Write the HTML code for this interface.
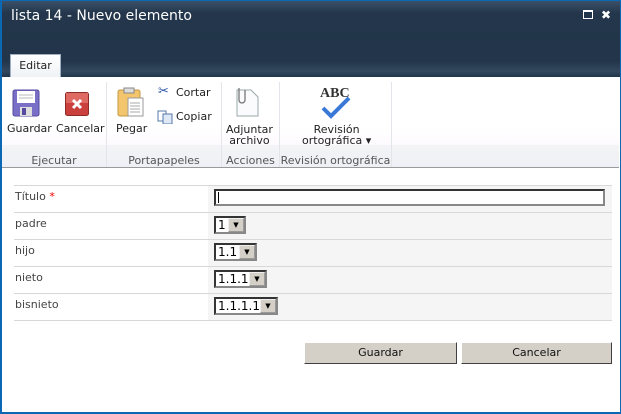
<!DOCTYPE html>
<html><head><meta charset="utf-8"><style>
*{margin:0;padding:0;box-sizing:border-box}
body{width:621px;height:414px;overflow:hidden;background:#fff;font-family:"DejaVu Sans","Liberation Sans",sans-serif;font-size:11px;color:#333;position:relative}
.a{position:absolute}
.frame{left:0;top:0;width:621px;height:414px;border:1px solid #0a68b4;border-left-width:2px;border-bottom-width:2px}
.title{left:2px;top:1px;width:618px;height:76px;background:linear-gradient(#3b5069 0,#23364b 12px,#22354a 60px,#33475e 70px,#22354a 76px)}
.tt{left:11px;top:8px;color:#fff;font-size:14px}
.tab{left:10px;top:54px;width:51px;height:24px;background:linear-gradient(#fff,#eef2f6);border:1px solid #9fb0c3;border-bottom:none;color:#222;font-size:11px;text-align:center;line-height:22px}
.rib{left:2px;top:77px;width:617px;height:68px;background:linear-gradient(#fff 50px,#fdfaff)}
.grp{left:2px;top:145px;width:617px;height:23px;background:linear-gradient(#f4f4f6,#edf0f5);border-bottom:1px solid #9a9a9a}
.sep{top:82px;width:1px;height:85px;background:#e2e5ea}
.gl{top:154px;color:#555;font-size:11px;text-align:center}
.bl{color:#222;font-size:11px;text-align:center;line-height:11px}
.line{left:14px;width:598px;height:1px;background:#d8d8d8}
.ctl{left:208px;top:185px;width:404px;height:135px;background:#f5f5f5}
.lab{left:15px;font-size:11px;color:#444}
.sel{height:18px;border:2px inset #888;background:#fff;font-size:12px;color:#000;padding-left:2px;line-height:14px}
.sel span{position:absolute;right:0;top:0;width:16px;height:14px;background:#d4d0c8;border:1px outset #eee;font-size:7px;text-align:center;line-height:12px}
.btn{top:342px;height:22px;background:#d4d0c8;border:1px solid;border-color:#fff #404040 #404040 #fff;font-size:11px;color:#111;text-align:center;line-height:20px}
</style></head><body>
<div class="a title"></div>
<div class="a tt">lista 14 - Nuevo elemento</div>
<div class="a" style="left:583px;top:10px;width:10px;height:9px;border:1px solid #fff;border-top-width:2px;background:#22354a"></div>
<div class="a" style="left:601px;top:8px;color:#fff;font-size:12px;font-weight:bold">✖</div>
<div class="a tab">Editar</div>
<div class="a rib"></div>
<div class="a grp"></div>
<div class="a sep" style="left:106px"></div>
<div class="a sep" style="left:221px"></div>
<div class="a sep" style="left:279px"></div>
<div class="a sep" style="left:391px"></div>
<svg class="a" style="left:12px;top:89px" width="28" height="28"><rect x="1" y="1" width="26" height="26" rx="2" fill="#7a6fc6" stroke="#554aa0"/><rect x="5" y="2" width="18" height="12" fill="#fff"/><line x1="7" y1="6" x2="21" y2="6" stroke="#bbb"/><line x1="7" y1="9" x2="21" y2="9" stroke="#bbb"/><rect x="8" y="18" width="12" height="9" fill="#ddd"/><rect x="10" y="19" width="4" height="7" fill="#554aa0"/></svg>
<svg class="a" style="left:65px;top:92px" width="24" height="24"><rect x="0.5" y="0.5" width="23" height="23" rx="2" fill="#c9403c" stroke="#8d2b26"/><rect x="1" y="1" width="22" height="10" fill="#de6a63"/><path d="M8 8l8 8M16 8l-8 8" stroke="#fff" stroke-width="3"/></svg>
<svg class="a" style="left:117px;top:86px" width="28" height="32"><rect x="1" y="4" width="22" height="26" rx="2" fill="#f3c66e" stroke="#c49640"/><rect x="7" y="2" width="10" height="5" fill="#ddd" stroke="#888"/><rect x="11" y="12" width="15" height="18" fill="#fff" stroke="#999"/><path d="M13 17h10M13 20h10M13 23h10M13 26h10" stroke="#aaa"/></svg>
<div class="a" style="left:158px;top:84px;color:#2a55a8;font-size:13px">✂</div>
<svg class="a" style="left:157px;top:110px" width="16" height="14"><rect x="1" y="1" width="8" height="10" fill="#fff" stroke="#5577aa"/><rect x="6" y="4" width="9" height="10" fill="#dfe8f5" stroke="#5577aa"/></svg>
<svg class="a" style="left:233px;top:86px" width="28" height="32"><path d="M4 4h14l7 7v19H4z" fill="#fbfbfd" stroke="#9aa"/><path d="M6 2v12a3 3 0 0 0 6 0V4" fill="none" stroke="#777" stroke-width="1.3"/></svg>
<div class="a" style="left:320px;top:86px;font-family:'Liberation Serif',serif;font-weight:bold;font-size:14px;color:#333">ABC</div>
<svg class="a" style="left:320px;top:96px" width="32" height="24"><path d="M3 12l8 8L29 2" fill="none" stroke="#3a78d8" stroke-width="4"/></svg>
<div class="a bl" style="left:7px;top:123px">Guardar</div>
<div class="a bl" style="left:56px;top:123px">Cancelar</div>
<div class="a bl" style="left:116px;top:123px">Pegar</div>
<div class="a bl" style="left:176px;top:87px">Cortar</div>
<div class="a bl" style="left:176px;top:111px">Copiar</div>
<div class="a bl" style="left:226px;top:124px">Adjuntar<br>archivo</div>
<div class="a bl" style="left:302px;top:124px">Revisión<br>ortográfica ▾</div>
<div class="a gl" style="left:2px;width:104px">Ejecutar</div>
<div class="a gl" style="left:107px;width:114px">Portapapeles</div>
<div class="a gl" style="left:222px;width:57px">Acciones</div>
<div class="a gl" style="left:280px;width:111px">Revisión ortográfica</div>
<div class="a ctl"></div>
<div class="a line" style="top:185px"></div>
<div class="a line" style="top:212px"></div>
<div class="a line" style="top:239px"></div>
<div class="a line" style="top:266px"></div>
<div class="a line" style="top:293px"></div>
<div class="a line" style="top:320px"></div>
<div class="a lab" style="top:190px">Título <span style="color:#e00">*</span></div>
<div class="a lab" style="top:217px">padre</div>
<div class="a lab" style="top:244px">hijo</div>
<div class="a lab" style="top:271px">nieto</div>
<div class="a lab" style="top:298px">bisnieto</div>
<div class="a" style="left:214px;top:189px;width:391px;height:17px;border:2px inset #888;background:#fff"><div style="position:absolute;left:2px;top:1px;width:1px;height:11px;background:#000"></div></div>
<div class="a sel" style="left:214px;top:216px;width:32px">1<span>▼</span></div>
<div class="a sel" style="left:214px;top:243px;width:43px">1.1<span>▼</span></div>
<div class="a sel" style="left:214px;top:270px;width:53px">1.1.1<span>▼</span></div>
<div class="a sel" style="left:214px;top:297px;width:64px">1.1.1.1<span>▼</span></div>
<div class="a btn" style="left:304px;width:153px">Guardar</div>
<div class="a btn" style="left:461px;width:151px">Cancelar</div>
<div class="a frame"></div>
</body></html>
